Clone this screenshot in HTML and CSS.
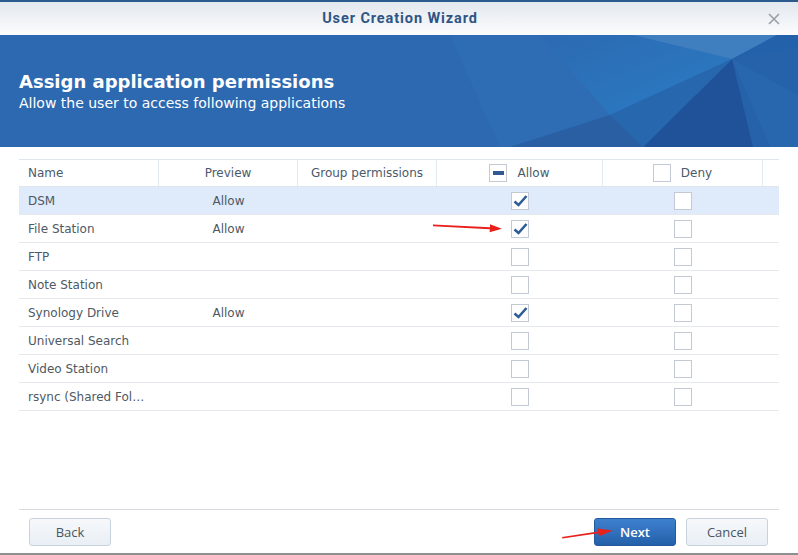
FILE: index.html
```html
<!DOCTYPE html>
<html>
<head>
<meta charset="utf-8">
<link rel="stylesheet" href="styles.css">
</head>
<body>
<div class="window">
  <div class="titlebar">
    <span class="title">User Creation Wizard</span>
    <svg class="close" width="12" height="12" viewBox="0 0 12 12"><path d="M1 1 L11 11 M11 1 L1 11" stroke="#9aa0a8" stroke-width="1.6" fill="none"/></svg>
  </div>
  <div class="banner">
    <svg class="banner-art" width="798" height="112" viewBox="0 0 798 112" preserveAspectRatio="none">
      <defs>
        <linearGradient id="gb" x1="0" y1="0" x2="1" y2="1">
          <stop offset="0" stop-color="#2c6ab2"/>
          <stop offset="1" stop-color="#2a7cc4"/>
        </linearGradient>
      </defs>
      <rect width="798" height="112" fill="#2d69b0"/>
      <polygon points="450,0 633,0 732,24 610,80 510,112 500,112" fill="#2e6db4"/>
      <polygon points="540,0 633,0 732,24 610,80" fill="url(#gb)"/>
      <polygon points="633,0 777,0 732,24" fill="#3f7fbf"/>
      <polygon points="777,0 798,0 798,12 732,24" fill="#2362aa"/>
      <polygon points="732,24 798,12 798,112 753,112" fill="#2562a9"/>
      <polygon points="732,24 798,60 798,112 770,112" fill="#2866ad"/>
      <polygon points="732,24 753,112 643,112" fill="#1f5298"/>
      <polygon points="610,80 732,24 643,112" fill="#2767ae"/>
      <polygon points="510,112 610,80 643,112" fill="#2a5fa4"/>
    </svg>
    <div class="banner-text">
      <h1 class="banner-title">Assign application permissions</h1>
      <p class="banner-sub">Allow the user to access following applications</p>
    </div>
  </div>
  <div class="body">
    <div class="grid">
      <div class="row head">
        <div class="cell c-name sep">Name</div>
        <div class="cell c-center sep">Preview</div>
        <div class="cell c-center sep">Group permissions</div>
        <div class="cell c-center sep"><span class="box"><span class="minus"></span></span><span class="hlabel">Allow</span></div>
        <div class="cell c-center sep"><span class="box"></span><span class="hlabel">Deny</span></div>
        <div class="cell"></div>
      </div>
      <div class="row selected">
        <div class="cell c-name">DSM</div>
        <div class="cell c-center">Allow</div>
        <div class="cell"></div>
        <div class="cell c-center"><span class="box"><svg class="tick" width="18" height="18" viewBox="0 0 18 18"><path d="M3.5 9.5 L7.5 13 L15.5 4" stroke="#2d5c97" stroke-width="2.6" fill="none"/></svg></span></div>
        <div class="cell c-center"><span class="box"></span></div>
        <div class="cell"></div>
      </div>
      <div class="row">
        <div class="cell c-name">File Station</div>
        <div class="cell c-center">Allow</div>
        <div class="cell"></div>
        <div class="cell c-center"><span class="box"><svg class="tick" width="18" height="18" viewBox="0 0 18 18"><path d="M3.5 9.5 L7.5 13 L15.5 4" stroke="#2d5c97" stroke-width="2.6" fill="none"/></svg></span></div>
        <div class="cell c-center"><span class="box"></span></div>
        <div class="cell"></div>
      </div>
      <div class="row">
        <div class="cell c-name">FTP</div>
        <div class="cell"></div>
        <div class="cell"></div>
        <div class="cell c-center"><span class="box"></span></div>
        <div class="cell c-center"><span class="box"></span></div>
        <div class="cell"></div>
      </div>
      <div class="row">
        <div class="cell c-name">Note Station</div>
        <div class="cell"></div>
        <div class="cell"></div>
        <div class="cell c-center"><span class="box"></span></div>
        <div class="cell c-center"><span class="box"></span></div>
        <div class="cell"></div>
      </div>
      <div class="row">
        <div class="cell c-name">Synology Drive</div>
        <div class="cell c-center">Allow</div>
        <div class="cell"></div>
        <div class="cell c-center"><span class="box"><svg class="tick" width="18" height="18" viewBox="0 0 18 18"><path d="M3.5 9.5 L7.5 13 L15.5 4" stroke="#2d5c97" stroke-width="2.6" fill="none"/></svg></span></div>
        <div class="cell c-center"><span class="box"></span></div>
        <div class="cell"></div>
      </div>
      <div class="row">
        <div class="cell c-name">Universal Search</div>
        <div class="cell"></div>
        <div class="cell"></div>
        <div class="cell c-center"><span class="box"></span></div>
        <div class="cell c-center"><span class="box"></span></div>
        <div class="cell"></div>
      </div>
      <div class="row">
        <div class="cell c-name">Video Station</div>
        <div class="cell"></div>
        <div class="cell"></div>
        <div class="cell c-center"><span class="box"></span></div>
        <div class="cell c-center"><span class="box"></span></div>
        <div class="cell"></div>
      </div>
      <div class="row">
        <div class="cell c-name">rsync (Shared Fol…</div>
        <div class="cell"></div>
        <div class="cell"></div>
        <div class="cell c-center"><span class="box"></span></div>
        <div class="cell c-center"><span class="box"></span></div>
        <div class="cell"></div>
      </div>
    </div>
  </div>
  <div class="footer">
    <button class="btn">Back</button>
    <div class="spacer"></div>
    <button class="btn primary">Next</button>
    <button class="btn">Cancel</button>
  </div>
  <svg class="annot" width="798" height="555" viewBox="0 0 798 555">
    <path d="M433 224.6 L490 227.3 L490 224.2 L502 228.8 L489.6 232.2 L489.8 229.2 L433 226.2 Z" fill="#e8211c"/>
    <path d="M562 537 L598 531.6 L597.4 528.4 L613 530.6 L599 536.2 L598.4 533.2 L562.4 538.6 Z" fill="#e8211c"/>
  </svg>
</div>
</body>
</html>
```
FILE: styles.css
```css
* { box-sizing: border-box; }
html, body { margin: 0; padding: 0; }
body {
  width: 798px;
  height: 555px;
  overflow: hidden;
  background: #ffffff;
  font-family: "DejaVu Sans", Verdana, sans-serif;
}
.window {
  position: relative;
  width: 798px;
  height: 555px;
  display: flex;
  flex-direction: column;
  border-top: 2px solid #2c5a8e;
  border-bottom: 2px solid #8d8f92;
  background: #fff;
}
.titlebar {
  height: 33px;
  flex: none;
  display: flex;
  align-items: center;
  justify-content: center;
  position: relative;
  background: linear-gradient(#e3e8ef, #fbfcfd);
}
.title {
  font-family: Roboto, "Liberation Sans", sans-serif;
  font-weight: 700;
  font-size: 14.5px;
  color: #2f5584;
  letter-spacing: 0.9px;
  padding-left: 2px;
}
.close {
  position: absolute;
  right: 18px;
  top: 11px;
}
.banner {
  height: 112px;
  flex: none;
  position: relative;
  overflow: hidden;
  background: #2d69b0;
}
.banner-art {
  position: absolute;
  left: 0;
  top: 0;
}
.banner-text {
  position: relative;
  padding: 36px 0 0 19px;
  color: #fff;
}
.banner-title {
  margin: 0;
  font-size: 18px;
  font-weight: 700;
  line-height: 22px;
}
.banner-sub {
  margin: 2px 0 0;
  font-size: 14px;
  line-height: 17px;
}
.body {
  flex: 1;
  padding: 12px 19px 0;
}
.grid {
  width: 760px;
}
.row {
  display: grid;
  grid-template-columns: 140px 139px 139px 166px 160px 16px;
  height: 28px;
  border-bottom: 1px solid #e5e9ee;
  font-size: 12px;
  color: #4e5964;
}
.row.head {
  border-top: 1px solid #dfe5ec;
  border-bottom: 1px solid #dfe5ec;
  color: #4b5a6b;
}
.row.selected {
  background: #dfeafa;
}
.cell {
  display: flex;
  align-items: center;
  white-space: nowrap;
  overflow: hidden;
}
.cell.sep {
  border-right: 1px solid #e3e9f0;
}
.c-name {
  padding-left: 9px;
}
.c-center {
  justify-content: center;
}
.box {
  width: 18px;
  height: 18px;
  border: 1px solid #c3cad5;
  background: #fff;
  display: inline-flex;
  align-items: center;
  justify-content: center;
  position: relative;
  flex: none;
  margin-right: 1px;
}
.tick {
  position: absolute;
  left: -1px;
  top: -1px;
}
.minus {
  width: 11px;
  height: 4px;
  background: #2f5a93;
}
.hlabel {
  margin-left: 9px;
}
.footer {
  flex: none;
  margin: 0 19px;
  border-top: 1px solid #d8dce1;
  padding: 8px 11px 7px 10px;
  display: flex;
  gap: 10px;
}
.spacer {
  flex: 1;
}
.btn {
  width: 82px;
  height: 28px;
  border: 1px solid #c8d2dc;
  border-radius: 3px;
  background: linear-gradient(#f6f8fb, #e9eff5);
  font-family: "Open Sans", sans-serif;
  font-size: 13px;
  color: #4a5561;
  padding: 0;
}
.btn.primary {
  background: linear-gradient(#3e80cd, #2460aa);
  border-color: #24599b;
  color: #fff;
  font-weight: 600;
}
.annot {
  position: absolute;
  left: 0;
  top: -2px;
  pointer-events: none;
}
```
